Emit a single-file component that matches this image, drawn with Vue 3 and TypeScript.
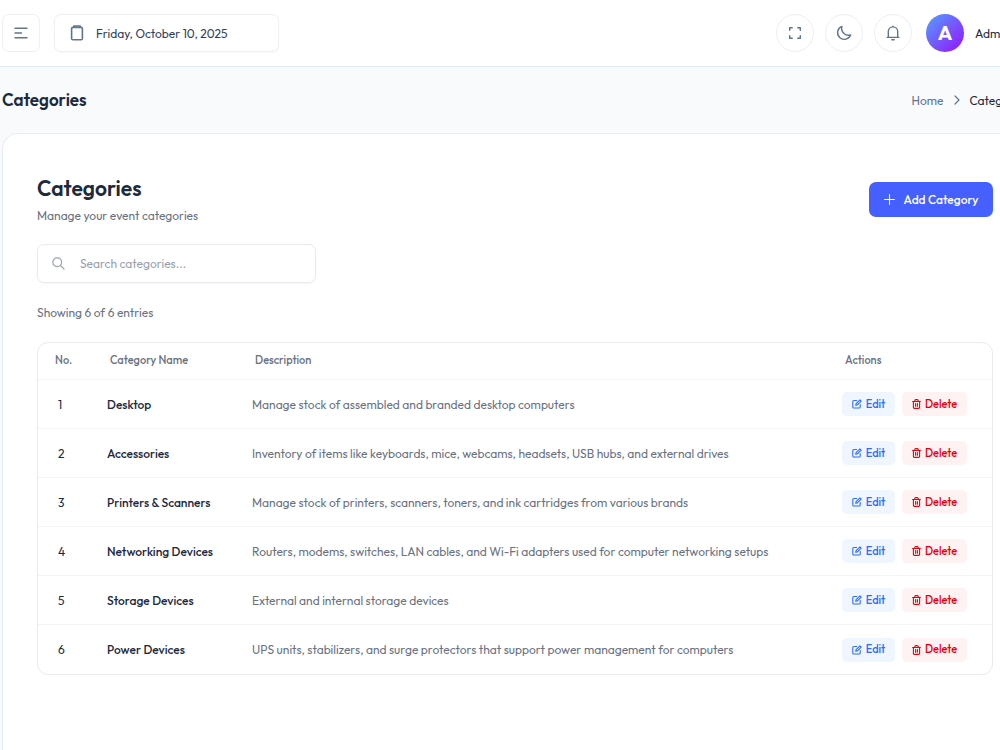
<script setup lang="ts">
import { computed, ref } from 'vue'

interface Category {
  id: number
  name: string
  description: string
}

const categories: Category[] = [
  { id: 1, name: 'Desktop', description: 'Manage stock of assembled and branded desktop computers' },
  { id: 2, name: 'Accessories', description: 'Inventory of items like keyboards, mice, webcams, headsets, USB hubs, and external drives' },
  { id: 3, name: 'Printers & Scanners', description: 'Manage stock of printers, scanners, toners, and ink cartridges from various brands' },
  { id: 4, name: 'Networking Devices', description: 'Routers, modems, switches, LAN cables, and Wi-Fi adapters used for computer networking setups' },
  { id: 5, name: 'Storage Devices', description: 'External and internal storage devices' },
  { id: 6, name: 'Power Devices', description: 'UPS units, stabilizers, and surge protectors that support power management for computers' },
]

const query = ref('')
const visible = computed(() =>
  categories.filter((c) => c.name.toLowerCase().includes(query.value.trim().toLowerCase())),
)
</script>

<template>
  <div class="viewport">
    <div class="shell">
      <header class="topbar">
        <button class="square" type="button" aria-label="Toggle menu">
          <svg width="14" height="12" viewBox="0 0 14 12" fill="none" stroke="currentColor" stroke-width="1.4" stroke-linecap="round">
            <path d="M1 1.2h12M1 6h6.5M1 10.8h12" />
          </svg>
        </button>
        <div class="date">
          <svg width="14" height="16" viewBox="0 0 14 16" fill="none" stroke="currentColor" stroke-width="1.6" stroke-linejoin="round">
            <rect x="1.6" y="2.4" width="10.8" height="12.4" rx="1.3" />
            <path d="M3.8 2.8V1h6.4v1.8" />
          </svg>
          <span>Friday, October 10, 2025</span>
        </div>
        <div class="tools">
          <button class="round" type="button" aria-label="Full screen">
            <svg width="14" height="14" viewBox="0 0 14 14" fill="none" stroke="currentColor" stroke-width="1.5" stroke-linecap="round" stroke-linejoin="round">
              <path d="M1.7 4.2V1.7h2.5M9.8 1.7h2.5v2.5M12.3 9.8v2.5H9.8M4.2 12.3H1.7V9.8" />
            </svg>
          </button>
          <button class="round" type="button" aria-label="Dark mode">
            <svg width="16" height="16" viewBox="0 0 16 16" fill="none" stroke="currentColor" stroke-width="1.4" stroke-linecap="round" stroke-linejoin="round">
              <path d="M5.9 1.4A6.7 6.7 0 1 0 14.6 10 7 7 0 0 1 5.9 1.4z" />
            </svg>
          </button>
          <button class="round" type="button" aria-label="Notifications">
            <svg width="14" height="16" viewBox="0 0 14 16" fill="none" stroke="currentColor" stroke-width="1.4" stroke-linecap="round" stroke-linejoin="round">
              <path d="M7 1.2v.6M2.3 12.2V6.6a4.7 4.7 0 0 1 9.4 0v5.6M1.2 12.4h11.6M5.8 14.7h2.4" />
            </svg>
          </button>
          <button class="user" type="button">
            <span class="avatar">A</span>
            <span>Admin</span>
          </button>
        </div>
      </header>

      <div class="pagehead">
        <h1>Categories</h1>
        <nav class="crumbs" aria-label="Breadcrumb">
          <a href="#">Home</a>
          <svg width="6" height="10" viewBox="0 0 6 10" fill="none" stroke="currentColor" stroke-width="1.2" stroke-linecap="round" stroke-linejoin="round">
            <path d="M1 1l4 4-4 4" />
          </svg>
          <span class="here">Categories</span>
        </nav>
      </div>

      <main class="card">
        <div class="cardhead">
          <div>
            <h2>Categories</h2>
            <p class="sub">Manage your event categories</p>
          </div>
          <button class="add" type="button">
            <svg width="11" height="11" viewBox="0 0 11 11" fill="none" stroke="currentColor" stroke-width="1.1" stroke-linecap="round">
              <path d="M5.5.6v9.8M.6 5.5h9.8" />
            </svg>
            <span>Add Category</span>
          </button>
        </div>

        <label class="search">
          <svg width="13" height="13" viewBox="0 0 13 13" fill="none" stroke="currentColor" stroke-width="1.2" stroke-linecap="round">
            <circle cx="5.2" cy="5.2" r="4.4" />
            <path d="M8.5 8.5l3.6 3.6" />
          </svg>
          <input v-model="query" type="text" placeholder="Search categories..." aria-label="Search categories" />
        </label>

        <p class="count">Showing {{ visible.length }} of {{ categories.length }} entries</p>

        <div class="tablebox">
          <table>
            <colgroup>
              <col class="c-no" />
              <col class="c-name" />
              <col />
              <col class="c-act" />
            </colgroup>
            <thead>
              <tr>
                <th scope="col">No.</th>
                <th scope="col">Category Name</th>
                <th scope="col">Description</th>
                <th scope="col">Actions</th>
              </tr>
            </thead>
            <tbody>
              <tr v-for="c in visible" :key="c.id">
                <td class="no">{{ c.id }}</td>
                <td class="name">{{ c.name }}</td>
                <td class="desc">{{ c.description }}</td>
                <td>
                  <div class="acts">
                    <button class="act edit" type="button">
                      <svg width="10" height="10" viewBox="0 0 10 10" fill="none" stroke="currentColor" stroke-width="1.1" stroke-linecap="round" stroke-linejoin="round">
                        <path d="M4.6 1.5H1.9A1.1 1.1 0 0 0 .8 2.6v5.3A1.1 1.1 0 0 0 1.9 9h5.2a1.1 1.1 0 0 0 1.1-1.1V5.5" />
                        <path d="M3.7 6.3l.4-1.7L7.9.8l1.3 1.3-3.8 3.8z" />
                      </svg>
                      <span>Edit</span>
                    </button>
                    <button class="act del" type="button">
                      <svg width="9" height="10" viewBox="0 0 9 10" fill="none" stroke="currentColor" stroke-width="1.1" stroke-linecap="round" stroke-linejoin="round">
                        <path d="M.6 2.5h7.8M1.4 2.6v5.7a1.1 1.1 0 0 0 1.1 1.1h4a1.1 1.1 0 0 0 1.1-1.1V2.6M2.8 2.4V1.5a.9.9 0 0 1 .9-.9h1.6a.9.9 0 0 1 .9.9v.9M3.6 4.6v2.6M5.4 4.6v2.6" />
                      </svg>
                      <span>Delete</span>
                    </button>
                  </div>
                </td>
              </tr>
            </tbody>
          </table>
        </div>
      </main>
    </div>
  </div>
</template>

<style>
body {
  margin: 0;
  background: #f8fafc;
}
</style>

<style scoped>
* {
  box-sizing: border-box;
}
.viewport {
  height: 100vh;
  overflow: hidden;
  background: #f8fafc;
  color: #1d293d;
  font-family: Outfit, Lato, "Noto Sans", sans-serif;
  font-size: 12px;
  line-height: 21px;
}
.shell {
  display: flex;
  flex-direction: column;
  width: calc(100% + 28px);
  min-height: 100%;
}
button,
input {
  font: inherit;
  color: inherit;
}
button {
  padding: 0;
  border: 0;
  background: none;
  cursor: pointer;
}
h1,
h2,
p {
  margin: 0;
}
svg {
  display: block;
  flex: none;
}
.topbar {
  display: flex;
  align-items: center;
  gap: 14px;
  padding: 14px 0 14px 2px;
  border-bottom: 1px solid #e2e8f0;
  background: #fff;
}
.square,
.round {
  display: flex;
  align-items: center;
  justify-content: center;
  width: 38px;
  height: 38px;
  border: 1px solid #eceff3;
  border-radius: 7px;
  background: #fff;
  color: #62748e;
}
.round {
  border-radius: 50%;
}
.date {
  display: flex;
  align-items: center;
  gap: 12px;
  width: 225px;
  height: 38px;
  padding: 0 15px;
  border: 1px solid #eceff3;
  border-radius: 7px;
  box-shadow: 0 1px 2px rgba(15, 23, 42, 0.04);
  color: #314158;
}
.date svg {
  color: #62748e;
}
.tools {
  display: flex;
  gap: 11px;
  margin-left: auto;
}
.user {
  display: flex;
  align-items: center;
  gap: 11px;
  width: 102px;
  margin-left: 3px;
}
.avatar {
  width: 38px;
  height: 38px;
  border-radius: 50%;
  background: linear-gradient(135deg, #51a2ff, #9810fa);
  color: #fff;
  font-size: 20px;
  font-weight: 700;
  line-height: 38px;
  text-align: center;
}
.pagehead {
  display: flex;
  align-items: center;
  justify-content: space-between;
  height: 66px;
  padding-left: 2px;
}
h1 {
  font-size: 17px;
  font-weight: 600;
  line-height: 24px;
}
.crumbs {
  display: flex;
  align-items: center;
  gap: 10px;
  color: #62748e;
}
.crumbs a {
  color: inherit;
  text-decoration: none;
}
.here {
  color: #1d293d;
}
.card {
  flex: 1;
  margin-left: 2px;
  padding: 41px 34px;
  border: 1px solid #e8edf3;
  border-bottom: 0;
  border-radius: 16px 16px 0 0;
  background: #fff;
}
.cardhead {
  display: flex;
  align-items: flex-start;
  justify-content: space-between;
}
h2 {
  font-size: 21px;
  font-weight: 600;
  line-height: 26px;
}
.sub {
  margin-top: 4px;
  color: #6a7282;
}
.add {
  display: flex;
  align-items: center;
  justify-content: center;
  gap: 9px;
  width: 124px;
  height: 35px;
  margin-top: 7px;
  border-radius: 7px;
  background: #465fff;
  color: #fff;
  font-weight: 500;
}
.search {
  display: flex;
  align-items: center;
  gap: 15px;
  width: 279px;
  height: 39px;
  margin-top: 18px;
  padding: 0 14px;
  border: 1px solid #e8ebef;
  border-radius: 7px;
  box-shadow: 0 1px 2px rgba(15, 23, 42, 0.04);
  color: #99a1af;
}
.search input {
  flex: 1;
  min-width: 0;
  padding: 0;
  border: 0;
  outline: 0;
  background: none;
  color: #1d293d;
}
.search input::placeholder {
  color: #99a1af;
  opacity: 1;
}
.count {
  margin-top: 19px;
  color: #6a7282;
}
.tablebox {
  margin-top: 19px;
  border: 1px solid #e8ebef;
  border-radius: 11px;
  overflow: hidden;
}
table {
  width: 100%;
  border-spacing: 0;
  table-layout: fixed;
}
.c-no {
  width: 55px;
}
.c-name {
  width: 145px;
}
.c-act {
  width: 164px;
}
th {
  height: 37px;
  padding: 0 0 2px 17px;
  border-bottom: 1px solid #f3f4f6;
  color: #6a7282;
  font-size: 11px;
  font-weight: 500;
  text-align: left;
}
td {
  height: 49px;
  padding: 0 0 0 14px;
  border-bottom: 1px solid #f3f4f6;
  white-space: nowrap;
}
tbody tr:last-child td {
  border-bottom: 0;
}
.no {
  padding-left: 20px;
}
.name {
  font-weight: 500;
}
.desc {
  color: #6a7282;
}
.acts {
  display: flex;
  gap: 7px;
}
.act {
  display: flex;
  align-items: center;
  justify-content: center;
  gap: 4px;
  width: 53px;
  height: 24px;
  border-radius: 5px;
  font-size: 11px;
  font-weight: 500;
}
.edit {
  background: #eff6ff;
  color: #2b6bff;
}
.del {
  width: 65px;
  background: #fef2f2;
  color: #e7000b;
}
</style>
